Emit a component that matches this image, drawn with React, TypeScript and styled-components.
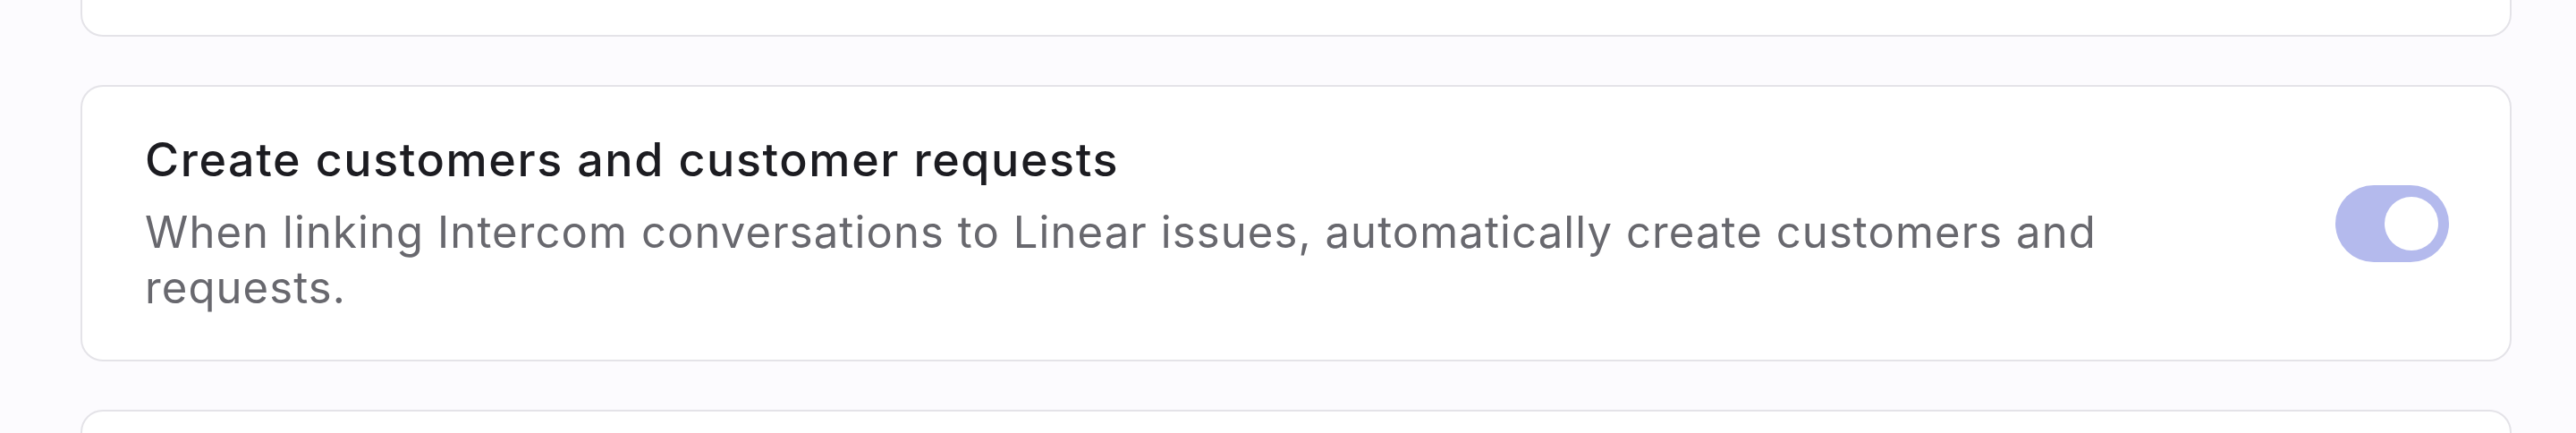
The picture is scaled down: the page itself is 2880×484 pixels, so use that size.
import React, { useState } from 'react';
import styled, { createGlobalStyle } from 'styled-components';

const GlobalStyle = createGlobalStyle`
    html, body {
        margin: 0;
        padding: 0;
        background: #fcfbfe;
        font-family: Inter, "Noto Sans", "Liberation Sans", sans-serif;
        overflow: hidden;
    }
`;

const SettingsList = styled.div`
    display: flex;
    flex-direction: column;
    gap: 54px;
    padding: 0 72px 0 90px;
    margin-top: -160px;
`;

const Card = styled.div<{ $height?: number }>`
    display: flex;
    flex-direction: row;
    align-items: center;
    justify-content: space-between;
    gap: 120px;
    box-sizing: border-box;
    min-height: ${p => (p.$height ? `${p.$height}px` : 'auto')};
    padding: 50px 68px 49px 70px;
    background: #ffffff;
    border: 2px solid #e4e3e8;
    border-radius: 25px;
`;

const CardText = styled.div`
    flex: 1;
    display: flex;
    flex-direction: column;
    gap: 18px;
    min-width: 0;
`;

const Title = styled.div`
    font-size: 52px;
    line-height: 64px;
    font-weight: 500;
    letter-spacing: 1.6px;
    color: #1c1c21;
`;

const Description = styled.div`
    font-size: 49px;
    line-height: 62px;
    font-weight: 400;
    letter-spacing: 1.1px;
    color: #68686e;
`;

const ToggleTrack = styled.button<{ $on: boolean }>`
    flex: none;
    display: flex;
    align-items: center;
    justify-content: ${p => (p.$on ? 'flex-end' : 'flex-start')};
    box-sizing: border-box;
    width: 127px;
    height: 86px;
    padding: 0 12px;
    border: none;
    border-radius: 43px;
    background: ${p => (p.$on ? '#b4baed' : '#dcdce2')};
    cursor: pointer;
`;

const ToggleKnob = styled.span`
    width: 60px;
    height: 60px;
    border-radius: 50%;
    background: #ffffff;
`;

const Toggle: React.FC<{ on: boolean; onChange: (v: boolean) => void }> = ({ on, onChange }) => (
    <ToggleTrack $on={on} onClick={() => onChange(!on)} aria-pressed={on}>
        <ToggleKnob />
    </ToggleTrack>
);

export default function App() {
    const [createRequests, setCreateRequests] = useState(true);

    return (
        <>
            <GlobalStyle />
            <SettingsList>
                <Card $height={201} />
                <Card>
                    <CardText>
                        <Title>Create customers and customer requests</Title>
                        <Description>
                            When linking Intercom conversations to Linear issues, automatically create customers and requests.
                        </Description>
                    </CardText>
                    <Toggle on={createRequests} onChange={setCreateRequests} />
                </Card>
                <Card $height={201} />
            </SettingsList>
        </>
    );
}
